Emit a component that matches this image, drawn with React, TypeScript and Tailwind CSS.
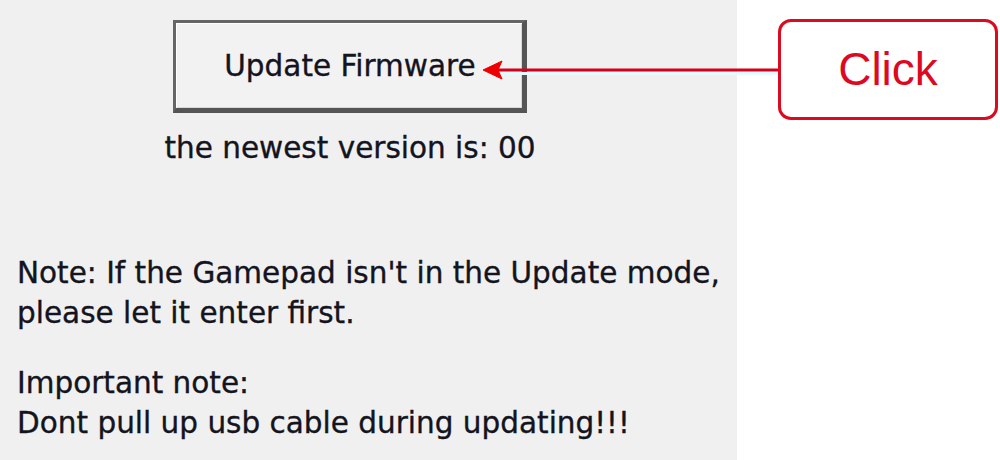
import React from "react";

export default function App() {
  const font = { fontFamily: '"DejaVu Sans", Verdana, sans-serif' };
  return (
    <div className="relative w-[1000px] h-[460px] flex overflow-hidden bg-white">
      <div className="w-[737px] h-full bg-[#f0f0f0] text-[#141420] text-[29.5px] leading-[40px] [-webkit-text-stroke:0.35px_#141420]" style={font}>
        <div className="w-[700px] flex flex-col items-center pt-[20px]">
          <div className="w-[354px] h-[93px] border-[3px] border-[#666] border-r-[5px] border-b-[5px] border-r-[#555] border-b-[#555] bg-[#f2f2f2] shadow-[inset_1px_1px_0_#ffffff,inset_-1px_-1px_0_#d8d8d8] flex items-center justify-center">
            <span className="pl-[2px]">Update Firmware</span>
          </div>
          <div className="mt-[15px]">the newest version is: 00</div>
        </div>
        <div className="pl-[17px] mt-[85px]">
          <div>Note: If the Gamepad isn't in the Update mode,</div>
          <div>please let it enter first.</div>
          <div className="mt-[30px]">Important note:</div>
          <div>Dont pull up usb cable during updating!!!</div>
        </div>
      </div>
      <div className="flex-1 h-full bg-white" />

      <svg className="absolute left-0 top-0 pointer-events-none" width="1000" height="460">
        <line x1="500" y1="73.5" x2="779" y2="73.5" stroke="#e6fbff" strokeWidth="3" />
        <line x1="496" y1="70" x2="779" y2="70" stroke="#d4001a" strokeWidth="3" />
        <path d="M483 70 L502 61 L498 70 L502 79 Z" fill="#ee0000" stroke="#ee0000" strokeWidth="1" strokeLinejoin="round" />
      </svg>

      <div
        className="absolute left-[778px] top-[19px] w-[220px] h-[101px] rounded-[13px] border-[3px] border-[#dc0a1e] bg-white flex items-center justify-center text-[#dd0a1f] text-[46px] leading-none"
        style={{ fontFamily: '"Liberation Sans", Arial, sans-serif' }}
      >
        <span className="-mt-[1px]">Click</span>
      </div>
    </div>
  );
}
